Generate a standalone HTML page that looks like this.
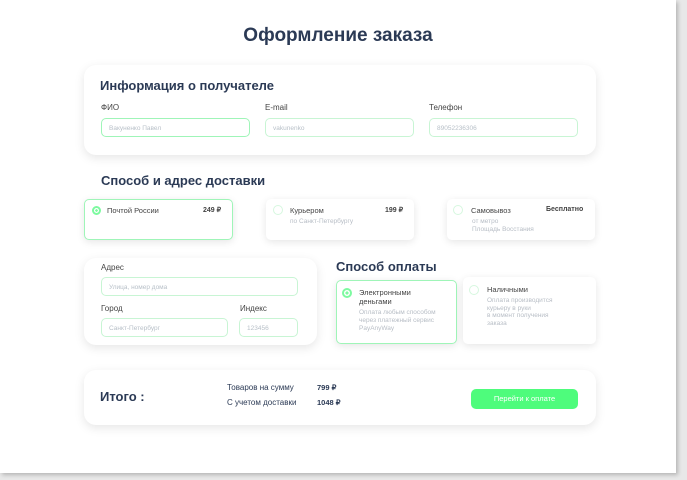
<!DOCTYPE html>
<html><head><meta charset="utf-8"><style>
*{box-sizing:border-box;margin:0;padding:0}
body{width:687px;height:480px;background:#e8e8e8;font-family:"Liberation Sans",sans-serif;color:#2b3a55;position:relative;overflow:hidden}
.page{position:absolute;left:0;top:0;width:676px;height:473px;background:#fff;box-shadow:2px 2px 4px rgba(0,0,0,.22)}
.a{position:absolute}
.card{position:absolute;background:#fff;border-radius:12px;box-shadow:0 3px 10px rgba(0,0,0,.1)}
.h{font-weight:bold;font-size:13px;color:#2b3a55}
.lbl{font-size:8px;color:#444}
.in{position:absolute;height:19px;border:1px solid #c8f5d4;border-radius:5px;font-size:6.5px;color:#b8c0c8;padding:6px 0 0 7px}
.dc{position:absolute;background:#fff;border-radius:5px;box-shadow:0 2px 8px rgba(0,0,0,.1);font-size:7.5px;color:#444}
.rad{position:absolute;width:10px;height:10px;border-radius:50%;border:1px solid #d6f7df}
.on{border:2.5px solid #7dfaa0;background:radial-gradient(#7dfaa0 35%,#fff 40%)}
.sub{font-size:6.5px;color:#b8bec6;line-height:8px}
</style></head><body><div class="page">
<div class="a" style="left:0;width:676px;top:25px;text-align:center;font-size:19px;font-weight:bold">Оформление заказа</div>

<div class="card" style="left:84px;top:65px;width:512px;height:90px"></div>
<div class="a h" style="left:100px;top:78px">Информация о получателе</div>
<div class="a lbl" style="left:101px;top:103px">ФИО</div>
<div class="a lbl" style="left:265px;top:103px">E-mail</div>
<div class="a lbl" style="left:429px;top:103px">Телефон</div>
<div class="in" style="left:101px;top:118px;width:149px;border-color:#9ff5b8;border-width:1.5px">Вакуненко Павел</div>
<div class="in" style="left:265px;top:118px;width:149px">vakunenko</div>
<div class="in" style="left:429px;top:118px;width:149px">89052236306</div>

<div class="a h" style="left:101px;top:173px">Способ и адрес доставки</div>
<div class="dc" style="left:84px;top:199px;width:149px;height:41px;border:1.5px solid #9ff5b8">
<div class="rad on" style="left:7px;top:6px;width:9px;height:9px"></div>
<div class="a" style="left:22px;top:6px">Почтой России</div>
<div class="a" style="left:118px;top:6px;font-weight:bold;font-size:7px">249 ₽</div></div>
<div class="dc" style="left:266px;top:199px;width:148px;height:41px">
<div class="rad" style="left:7px;top:6px"></div>
<div class="a" style="left:24px;top:7px">Курьером</div>
<div class="a" style="left:119px;top:7px;font-weight:bold;font-size:7px">199 ₽</div>
<div class="a sub" style="left:24px;top:19px">по Санкт-Петербургу</div></div>
<div class="dc" style="left:447px;top:199px;width:148px;height:41px">
<div class="rad" style="left:6px;top:6px"></div>
<div class="a" style="left:24px;top:7px">Самовывоз</div>
<div class="a" style="left:99px;top:7px;font-weight:bold;font-size:7px">Бесплатно</div>
<div class="a sub" style="left:25px;top:19px">от метро<br>Площадь Восстания</div></div>

<div class="card" style="left:84px;top:258px;width:233px;height:87px"></div>
<div class="a lbl" style="left:101px;top:263px">Адрес</div>
<div class="in" style="left:101px;top:277px;width:197px">Улица, номер дома</div>
<div class="a lbl" style="left:101px;top:304px">Город</div>
<div class="a lbl" style="left:240px;top:304px">Индекс</div>
<div class="in" style="left:101px;top:318px;width:127px">Санкт-Петербург</div>
<div class="in" style="left:239px;top:318px;width:59px">123456</div>

<div class="a h" style="left:336px;top:259px">Способ оплаты</div>
<div class="dc" style="left:336px;top:280px;width:121px;height:64px;border:1.5px solid #9ff5b8">
<div class="rad on" style="left:5px;top:7px"></div>
<div class="a" style="left:22px;top:7px;line-height:9px">Электронными<br>деньгами</div>
<div class="a sub" style="left:22px;top:28px">Оплата любым способом<br>через платежный сервис<br>PayAnyWay</div></div>
<div class="dc" style="left:463px;top:277px;width:133px;height:67px">
<div class="rad" style="left:6px;top:8px"></div>
<div class="a" style="left:24px;top:8px">Наличными</div>
<div class="a sub" style="left:24px;top:20px;line-height:7.5px">Оплата производится<br>курьеру в руки<br>в момент получения<br>заказа</div></div>

<div class="card" style="left:84px;top:370px;width:512px;height:55px"></div>
<div class="a h" style="left:100px;top:389px;font-size:13px">Итого :</div>
<div class="a lbl" style="left:227px;top:383px;color:#2b3a55">Товаров на сумму</div>
<div class="a lbl" style="left:227px;top:398px;color:#2b3a55">С учетом доставки</div>
<div class="a" style="left:317px;top:383px;font-size:7.5px;font-weight:bold">799 ₽</div>
<div class="a" style="left:317px;top:398px;font-size:7.5px;font-weight:bold">1048 ₽</div>
<div class="a" style="left:471px;top:389px;width:107px;height:20px;background:#4efc7c;border-radius:5px;color:#fff;font-size:7.5px;text-align:center;line-height:20px">Перейти к оплате</div>
</div></body></html>
